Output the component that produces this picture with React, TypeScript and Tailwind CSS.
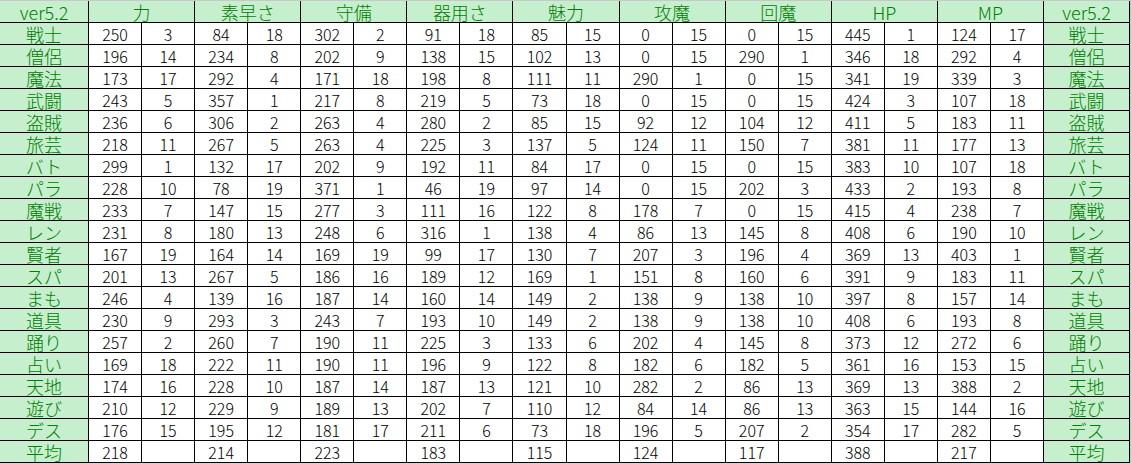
import React from "react";

const stats = ["力", "素早さ", "守備", "器用さ", "魅力", "攻魔", "回魔", "HP", "MP"];

// [job, value, rank, value, rank, ...]
const rows: [string, number[]][] = [
  ["戦士", [250, 3, 84, 18, 302, 2, 91, 18, 85, 15, 0, 15, 0, 15, 445, 1, 124, 17]],
  ["僧侶", [196, 14, 234, 8, 202, 9, 138, 15, 102, 13, 0, 15, 290, 1, 346, 18, 292, 4]],
  ["魔法", [173, 17, 292, 4, 171, 18, 198, 8, 111, 11, 290, 1, 0, 15, 341, 19, 339, 3]],
  ["武闘", [243, 5, 357, 1, 217, 8, 219, 5, 73, 18, 0, 15, 0, 15, 424, 3, 107, 18]],
  ["盗賊", [236, 6, 306, 2, 263, 4, 280, 2, 85, 15, 92, 12, 104, 12, 411, 5, 183, 11]],
  ["旅芸", [218, 11, 267, 5, 263, 4, 225, 3, 137, 5, 124, 11, 150, 7, 381, 11, 177, 13]],
  ["バト", [299, 1, 132, 17, 202, 9, 192, 11, 84, 17, 0, 15, 0, 15, 383, 10, 107, 18]],
  ["パラ", [228, 10, 78, 19, 371, 1, 46, 19, 97, 14, 0, 15, 202, 3, 433, 2, 193, 8]],
  ["魔戦", [233, 7, 147, 15, 277, 3, 111, 16, 122, 8, 178, 7, 0, 15, 415, 4, 238, 7]],
  ["レン", [231, 8, 180, 13, 248, 6, 316, 1, 138, 4, 86, 13, 145, 8, 408, 6, 190, 10]],
  ["賢者", [167, 19, 164, 14, 169, 19, 99, 17, 130, 7, 207, 3, 196, 4, 369, 13, 403, 1]],
  ["スパ", [201, 13, 267, 5, 186, 16, 189, 12, 169, 1, 151, 8, 160, 6, 391, 9, 183, 11]],
  ["まも", [246, 4, 139, 16, 187, 14, 160, 14, 149, 2, 138, 9, 138, 10, 397, 8, 157, 14]],
  ["道具", [230, 9, 293, 3, 243, 7, 193, 10, 149, 2, 138, 9, 138, 10, 408, 6, 193, 8]],
  ["踊り", [257, 2, 260, 7, 190, 11, 225, 3, 133, 6, 202, 4, 145, 8, 373, 12, 272, 6]],
  ["占い", [169, 18, 222, 11, 190, 11, 196, 9, 122, 8, 182, 6, 182, 5, 361, 16, 153, 15]],
  ["天地", [174, 16, 228, 10, 187, 14, 187, 13, 121, 10, 282, 2, 86, 13, 369, 13, 388, 2]],
  ["遊び", [210, 12, 229, 9, 189, 13, 202, 7, 110, 12, 84, 14, 86, 13, 363, 15, 144, 16]],
  ["デス", [176, 15, 195, 12, 181, 17, 211, 6, 73, 18, 196, 5, 207, 2, 354, 17, 282, 5]],
];

const average = [218, 214, 223, 183, 115, 124, 117, 388, 217];

const cell = "h-[22px] border-r border-b border-black flex items-center justify-center leading-none font-light";
const label = `${cell} bg-[#c6efce] text-[#008000] text-[18px] pt-px`;
const num = `${cell} bg-white text-black text-[16px]`;

export default function App() {
  return (
    <div
      className="w-[1131px] h-[463px] bg-white border-t border-r border-[#c8c8c8]"
      style={{ fontFamily: '"Noto Sans CJK JP", "Noto Sans", sans-serif' }}
    >
      <div className="grid w-[1130px] grid-cols-[89px_repeat(18,minmax(0,1fr))_86px]">
        {/* header */}
        <div className={`${label} text-[17px]`}>ver5.2</div>
        {stats.map((s) => (
          <div key={s} className={`${label} col-span-2`}>
            {s}
          </div>
        ))}
        <div className={`${label} text-[17px]`}>ver5.2</div>

        {/* job rows */}
        {rows.map(([job, vals]) => (
          <React.Fragment key={job}>
            <div className={label}>{job}</div>
            {vals.map((v, i) => (
              <div key={i} className={num}>
                {v}
              </div>
            ))}
            <div className={label}>{job}</div>
          </React.Fragment>
        ))}

        {/* average */}
        <div className={label}>平均</div>
        {average.map((v, i) => (
          <React.Fragment key={i}>
            <div className={num}>{v}</div>
            <div className={num}></div>
          </React.Fragment>
        ))}
        <div className={label}>平均</div>
      </div>
    </div>
  );
}
